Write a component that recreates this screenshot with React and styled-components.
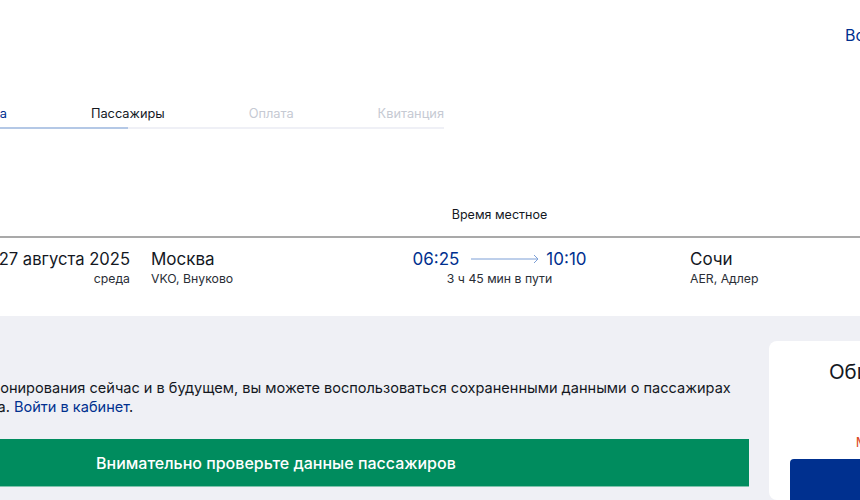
import React from "react";
import styled, { createGlobalStyle } from "styled-components";

const Global = createGlobalStyle`
  html, body { margin: 0; padding: 0; width: 860px; height: 500px; overflow: hidden; background: #fff; }
  body { font-family: Inter, "Liberation Sans", Arial, sans-serif; color: #14181f; }
  a { color: #00308f; text-decoration: none; }
`;
const Page = styled.div`
  width: 860px; height: 500px; overflow: hidden; display: flex; flex-direction: column;
`;
const Header = styled.header`
  height: 70px; flex: none; display: flex; justify-content: flex-end; padding-top: 24px; box-sizing: border-box;
`;
const HeaderLink = styled.a`
  font-size: 16px; line-height: 22px; flex: none; width: 15px; overflow: hidden; white-space: nowrap;
`;
const Stepper = styled.nav`
  margin-top: 34px; margin-left: -75px; width: 519px; height: 23px; flex: none; position: relative;
  display: flex; justify-content: space-between; align-items: flex-start;
  border-bottom: 2px solid #eff0f6;
  box-sizing: content-box;
`;
const Progress = styled.div`
  position: absolute; left: 0; bottom: -2px; height: 2px; background: #b4c8e6;
`;
const Step = styled.span`
  font-size: 12.8px; line-height: 20px; white-space: nowrap;
  color: ${p => p.$state === "done" ? "#00308f" : p.$state === "active" ? "#14181f" : "#c6cad3"};
`;
const Local = styled.div`
  margin-top: 76px; height: 31px; flex: none; font-size: 12.5px; line-height: 20px; text-align: center;
  width: 999px;
`;
const Flight = styled.section`
  border-top: 2px solid #a9a9a9; height: 80px; flex: none; box-sizing: border-box;
  display: flex; padding-top: 9px; margin-left: -60px; width: 1000px;
`;
const DateCol = styled.div`
  width: 190px; text-align: right; flex: none;
`;
const Place = styled.div`
  flex: none; width: ${p => p.$w}px; margin-left: ${p => p.$ml}px;
`;
const Big = styled.div`
  font-size: ${p => p.$size || 17}px; line-height: 24px; white-space: nowrap;
`;
const Small = styled.div`
  font-size: 12.25px; line-height: 16px; color: #2a2e36; white-space: nowrap;
`;
const TimeCol = styled.div`
  flex: none; width: 173px; display: flex; flex-direction: column; align-items: center;
`;
const Times = styled.div`
  display: flex; align-items: center; gap: 7px; font-size: 17px; line-height: 24px; color: #00308f;
`;
const Route = styled.svg`
  margin-left: 5px; display: block;
`;
const Grey = styled.main`
  flex: 1; min-height: 0; background: #eff0f5; display: flex; gap: 20px; padding-top: 25px; margin-left: -400px; width: 1700px;
`;
const Left = styled.div`
  flex: none; width: 1149px; padding-top: 38px;
`;
const Para = styled.p`
  margin: 0 0 22px 0; font-size: 14.55px; line-height: 19px; padding-left: 271px; white-space: nowrap;
`;
const Banner = styled.div`
  height: 47px; background: #008c5e; border-bottom: 1px solid #7fc4ad; color: #fff; box-sizing: content-box;
  display: flex; align-items: center; padding-left: 496px; font-size: 16px; font-weight: 500;
`;
const Card = styled.aside`
  flex: none; width: 300px; background: #fff; border-radius: 8px; padding: 18px 21px; box-sizing: border-box; text-align: center;
`;
const CardTitle = styled.h2`
  margin: 0; font-size: 20.5px; line-height: 26px; font-weight: 400; white-space: nowrap;
`;
const Warn = styled.div`
  margin-top: 48px; font-size: 13.4px; line-height: 18px; color: #dc4a26; white-space: nowrap;
`;
const Pay = styled.button`
  display: block; margin-top: 8px; width: 100%; height: 60px; background: #00308f; border: 0; border-radius: 4px; color: #fff;
`;

export default function App() {
  return (
    <Page>
      <Global />
      <Header><HeaderLink href="#">Войти</HeaderLink></Header>
      <Stepper>
        <Progress style={{ width: 203 }} />
        <Step $state="done">Выбор рейса</Step>
        <Step $state="active">Пассажиры</Step>
        <Step>Оплата</Step>
        <Step>Квитанция</Step>
      </Stepper>
      <Local>Время местное</Local>
      <Flight>
        <DateCol><Big $size={16.6}>27 августа 2025</Big><Small>среда</Small></DateCol>
        <Place $ml={21} $w={262}><Big>Москва</Big><Small>VKO, Внуково</Small></Place>
        <TimeCol>
          <Times>
            06:25
            <Route width="68" height="10" viewBox="0 0 68 10" fill="none" stroke="#7d9fd6" strokeWidth="1">
              <path d="M0 5H67M63 1l4 4-4 4" />
            </Route>
            10:10
          </Times>
          <Small>3 ч 45 мин в пути</Small>
        </TimeCol>
        <Place $ml={104} $w={200}><Big>Сочи</Big><Small>AER, Адлер</Small></Place>
      </Flight>
      <Grey>
        <Left>
          <Para>
            Для ускорения бронирования сейчас и в будущем, вы можете воспользоваться сохраненными данными о пассажирах<br />
            (Личного кабинета. <a href="#">Войти в кабинет</a>.
          </Para>
          <Banner>Внимательно проверьте данные пассажиров</Banner>
        </Left>
        <Card>
          <CardTitle>Общая стоимость</CardTitle>
          <Warn>Минимальная цена</Warn>
          <Pay>Продолжить</Pay>
        </Card>
      </Grey>
    </Page>
  );
}
